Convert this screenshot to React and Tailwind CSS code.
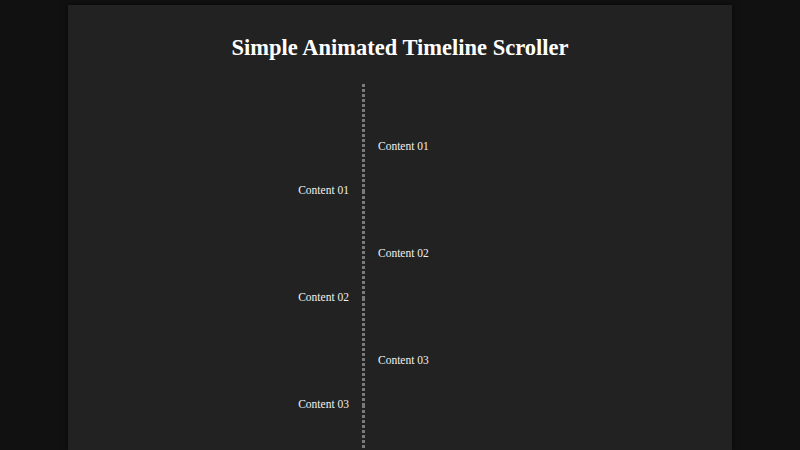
const items = ["01", "02", "03"];

const dots =
  "w-[3px] bg-[repeating-linear-gradient(to_bottom,#7a7a7a_0_3px,transparent_3px_5px)]";

function Row({ label }) {
  return (
    <div className="flex h-[107px]">
      <div className="w-[294px] pr-[13px] pt-[99px] text-right">
        <div className="whitespace-nowrap">Content {label}</div>
      </div>
      <div className={dots} />
      <div className="pl-[13px] pt-[55px]">
        <div className="whitespace-nowrap">Content {label}</div>
      </div>
    </div>
  );
}

export default function App() {
  return (
    <div className="h-screen overflow-hidden bg-[#111] px-[68px] pt-[5px] font-['Liberation_Serif',serif] text-[#f0f0f0]">
      <div className="h-full bg-[#222] shadow-[0_0_6px_rgba(0,0,0,0.6)]">
        <h1 className="pt-[29px] text-center text-[22.5px] font-bold leading-[28px] text-white">
          Simple Animated Timeline Scroller
        </h1>
        <div className="mt-[22px] text-[11.5px] leading-[14px]">
          {items.map((n) => (
            <Row key={n} label={n} />
          ))}
          {/* line keeps running below the last entry */}
          <div className="flex h-[60px]">
            <div className="w-[294px]" />
            <div className={dots} />
          </div>
        </div>
      </div>
    </div>
  );
}
